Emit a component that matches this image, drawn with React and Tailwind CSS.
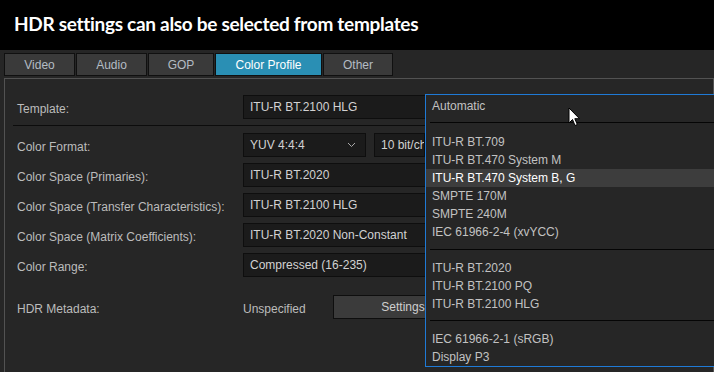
import React from 'react';

const tabs = [
  { name: 'Video', w: 'w-[71px]' },
  { name: 'Audio', w: 'w-[71px]' },
  { name: 'GOP', w: 'w-[66px]' },
  { name: 'Color Profile', w: 'w-[107px]', active: true },
  { name: 'Other', w: 'w-[70px]' },
];

const groups = [
  { items: ['Automatic'] },
  {
    sep: 'mt-[7px] mb-[10px]',
    items: [
      'ITU-R BT.709',
      'ITU-R BT.470 System M',
      'ITU-R BT.470 System B, G',
      'SMPTE 170M',
      'SMPTE 240M',
      'IEC 61966-2-4 (xvYCC)',
    ],
  },
  { sep: 'mt-[8px] mb-[9px]', items: ['ITU-R BT.2020', 'ITU-R BT.2100 PQ', 'ITU-R BT.2100 HLG'] },
  { sep: 'mt-[7px] mb-[9px]', items: ['IEC 61966-2-1 (sRGB)', 'Display P3'] },
];

const Field = ({ children, className = 'w-[200px]' }) => (
  <div className={`${className} h-[24px] shrink-0 flex items-center px-[6px] bg-[#1b1b1b] border border-[#0e0e0e] text-[#d2d2d2] text-[12px]`}>
    {children}
  </div>
);

const Row = ({ label, children }) => (
  <div className="flex items-center h-[24px]">
    <div className="w-[226px] shrink-0 pt-[3px] text-[12px] text-[#bcbcbc]">{label}</div>
    {children}
  </div>
);

const Cursor = () => (
  <svg width="13" height="20" viewBox="0 0 13 20" className="absolute left-[568px] top-[107px]">
    <path d="M1 1 L1 16 L4.5 12.5 L7 18.5 L9.3 17.5 L6.8 11.7 L11.5 11.7 Z" fill="#fff" stroke="#000" strokeWidth="1" strokeLinejoin="round" />
  </svg>
);

export default function App() {
  return (
    <div className="relative w-[714px] h-[372px] overflow-hidden bg-[#262626] font-['Liberation_Sans',Arial,sans-serif]">
      <div className="h-[50px] bg-black pl-[14px] pt-[11px]">
        <h1 className="font-['Lato',sans-serif] font-bold text-[19px] leading-[26px] text-white tracking-[-0.3px]">
          HDR settings can also be selected from templates
        </h1>
      </div>

      <div className="flex gap-[1px] pl-[4px] mt-[3px] h-[23px]">
        {tabs.map((t) => (
          <div
            key={t.name}
            className={`${t.w} h-full flex items-center justify-center border border-[#101010] text-[12px] ${
              t.active ? 'bg-[#2a8fb4] text-white' : 'bg-[#3a3a3a] text-[#b4bcc4]'
            }`}
          >
            {t.name}
          </div>
        ))}
      </div>

      <div className="ml-[4px] mt-[2px] w-[710px] h-[300px] border-l border-t border-r border-[#525252] pt-[16px] pl-[12px]">
        <Row label="Template:">
          <Field className="w-[300px]">ITU-R BT.2100 HLG</Field>
        </Row>

        <div className="h-px bg-[#0c0c0c] mt-[6px] mb-[7px] -ml-[4px] mr-[6px]" />

        <div className="flex flex-col gap-[6px]">
          <Row label="Color Format:">
            <Field className="w-[123px] justify-between">
              <span>YUV 4:4:4</span>
              <svg width="9" height="6" viewBox="0 0 9 6" className="mr-[3px]">
                <path d="M1 1 L4.5 4.5 L8 1" fill="none" stroke="#a8a8a8" strokeWidth="1" />
              </svg>
            </Field>
            <Field className="w-[51px] ml-[8px] overflow-hidden whitespace-nowrap !pr-0">10 bit/channel</Field>
          </Row>
          <Row label="Color Space (Primaries):">
            <Field className="w-[300px]">ITU-R BT.2020</Field>
          </Row>
          <Row label="Color Space (Transfer Characteristics):">
            <Field className="w-[300px]">ITU-R BT.2100 HLG</Field>
          </Row>
          <Row label="Color Space (Matrix Coefficients):">
            <Field className="w-[300px]">ITU-R BT.2020 Non-Constant</Field>
          </Row>
          <Row label="Color Range:">
            <Field className="w-[300px]">Compressed (16-235)</Field>
          </Row>
        </div>

        <div className="mt-[18px]">
          <Row label="HDR Metadata:">
            <div className="w-[90px] shrink-0 pt-[3px] text-[12px] text-[#bcbcbc]">Unspecified</div>
            <div className="w-[140px] h-[24px] flex items-center justify-center bg-[#3b3b3b] border border-[#0e0e0e] text-[12px] text-[#cfcfcf]">
              Settings
            </div>
          </Row>
        </div>
      </div>

      <div className="absolute left-[425px] top-[94px] w-[300px] h-[273px] bg-[#262626] border border-[#1f7ad6] text-[12px] text-[#c2c2c2]">
        {groups.map((g, gi) => (
          <div key={gi}>
            {g.sep && <div className={`h-px bg-[#050505] ml-[4px] ${g.sep}`} />}
            <div className={gi === 0 ? 'pt-[2px]' : ''}>
              {g.items.map((item) => {
                const hi = item === 'ITU-R BT.470 System B, G';
                return (
                  <div
                    key={item}
                    className={`h-[18px] flex items-center pl-[6px] ${hi ? 'bg-[#3d3d3d] text-white' : ''}`}
                  >
                    {item}
                  </div>
                );
              })}
            </div>
          </div>
        ))}
      </div>

      <Cursor />
    </div>
  );
}
